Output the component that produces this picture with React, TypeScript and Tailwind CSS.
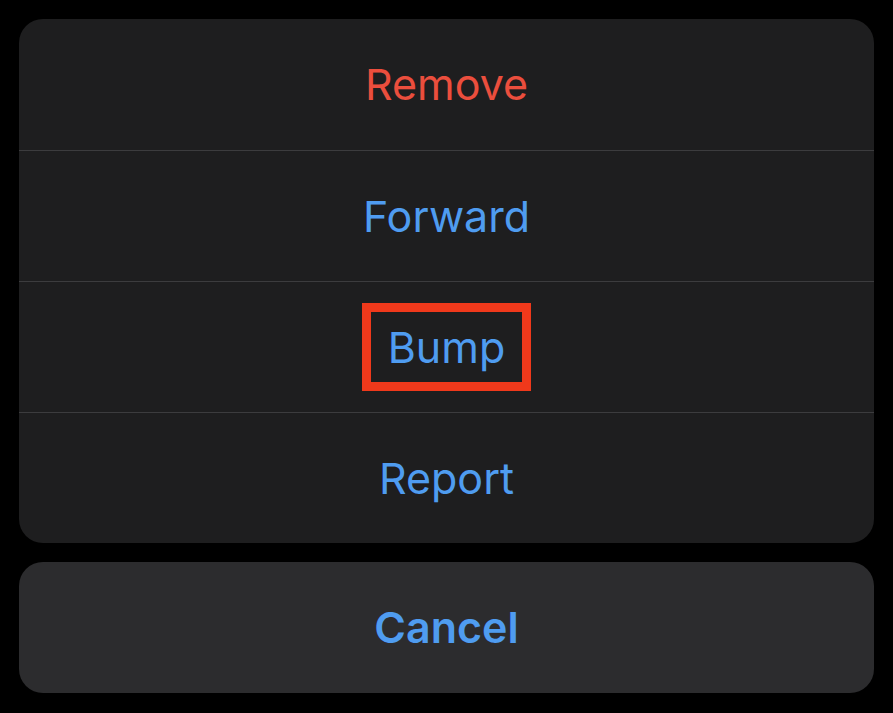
export default function App() {
  const rows = [
    { label: "Remove", color: "text-[#eb4e3d]" },
    { label: "Forward", color: "text-[#4f9cf0]" },
    { label: "Bump", color: "text-[#4f9cf0]", marked: true },
    { label: "Report", color: "text-[#4f9cf0]" },
  ];

  return (
    <div
      className="w-[893px] h-[713px] bg-black p-[19px] flex flex-col gap-[19px]"
      style={{ fontFamily: "Inter, 'Liberation Sans', sans-serif" }}
    >
      <div className="bg-[#1e1e1f] rounded-[24px] flex flex-col overflow-hidden">
        {rows.map((r, i) => (
          <div
            key={r.label}
            className={`h-[131px] flex items-center justify-center ${i > 0 ? "border-t border-[#3c3c3e]" : ""}`}
          >
            {r.marked ? (
              <span className="inline-flex items-center justify-center border-[9px] border-[#f0391b] w-[169px] h-[88px]">
                <span className={`text-[43px] leading-none ${r.color}`}>{r.label}</span>
              </span>
            ) : (
              <span className={`text-[43px] leading-none ${r.color}`}>{r.label}</span>
            )}
          </div>
        ))}
      </div>
      <div className="bg-[#2c2c2e] rounded-[24px] h-[131px] flex items-center justify-center">
        <span className="text-[43px] leading-none font-semibold text-[#4f9cf0]">Cancel</span>
      </div>
    </div>
  );
}
